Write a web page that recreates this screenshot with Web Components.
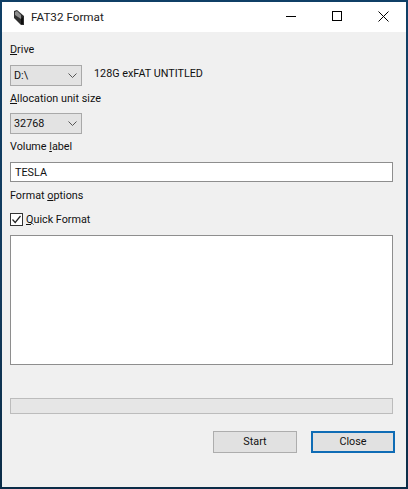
<!DOCTYPE html>
<html>
<head>
<meta charset="utf-8">
<style>
html, body { margin:0; height:100%; }
body { background:linear-gradient(180deg,#0f3f66 0%,#123a5c 60%,#0b2c47 100%); font:10.8px "Roboto","Open Sans",sans-serif; color:#111; overflow:hidden; }
</style>
</head>
<body>
<fat-window title="FAT32 Format">
  <form-label><u>D</u>rive</form-label>
  <div style="display:flex;align-items:flex-start;gap:12px;height:21px;margin-top:7px;">
    <combo-box value="D:\"></combo-box>
    <span style="line-height:17px;">128G exFAT UNTITLED</span>
  </div>
  <form-label style="margin-top:4px;"><u>A</u>llocation unit size</form-label>
  <div style="height:21px;margin-top:6px;"><combo-box value="32768"></combo-box></div>
  <form-label style="margin-top:4px;">Volume <u>l</u>abel</form-label>
  <text-box value="TESLA" style="margin-top:7px;"></text-box>
  <form-label style="margin-top:5px;">Format <u>o</u>ptions</form-label>
  <check-box style="margin-top:7px;"><u>Q</u>uick Format</check-box>
  <log-area style="margin-top:8px;"></log-area>
  <progress-bar style="margin-top:33px;"></progress-bar>
  <div style="display:flex;justify-content:flex-end;gap:14px;margin-top:17px;margin-right:-2px;">
    <push-button>Start</push-button>
    <push-button focused>Close</push-button>
  </div>
</fat-window>

<script>
// title bar + client area
class FatWindow extends HTMLElement {
  constructor(){
    super();
    this.attachShadow({mode:"open"}).innerHTML = `
    <style>
      :host { display:flex; flex-direction:column; box-sizing:border-box; width:404px; height:485px; margin:2px; background:#f0f0f0; }
      .bar { display:flex; align-items:center; height:30px; background:#fff; flex:none; }
      .app { width:10px; height:15px; margin-left:12px; }
      .name { margin-left:7px; font-size:11.7px; color:#222; flex:1; }
      .ctl { width:46px; height:30px; display:flex; align-items:center; justify-content:center; padding-bottom:2px; box-sizing:border-box; }
      .ctl svg { display:block; }
      .body { display:flex; flex-direction:column; padding:9px 13px 0 8px; flex:1; }
    </style>
    <div class="bar">
      <svg class="app" viewBox="0 0 10 15">
        <path d="M0 1 L3 0 L10 6 L10 15 L7 15 L0 8 Z" fill="#2e2e2e"/>
        <path d="M1 2 L3 1 L7 5 L7 9 L1 5 Z" fill="#8c8c8c"/>
        <path d="M7 9 L9 7 L9 14 L7 14 Z" fill="#0d0d0d"/>
      </svg>
      <span class="name"></span>
      <div class="ctl"><svg width="10" height="10"><path d="M0 5.5H10" stroke="#000" fill="none"/></svg></div>
      <div class="ctl"><svg width="10" height="10"><rect x=".5" y=".5" width="9" height="9" stroke="#000" fill="none"/></svg></div>
      <div class="ctl"><svg width="11" height="11"><path d="M.5 .5L10.5 10.5M10.5 .5L.5 10.5" stroke="#000" fill="none"/></svg></div>
    </div>
    <div class="body"><slot></slot></div>`;
    this.shadowRoot.querySelector(".name").textContent = this.getAttribute("title");
  }
}
customElements.define("fat-window", FatWindow);

class FormLabel extends HTMLElement {
  constructor(){
    super();
    this.attachShadow({mode:"open"}).innerHTML = `
    <style>:host { display:block; height:17px; line-height:17px; color:#111; }</style>
    <slot></slot>`;
  }
}
customElements.define("form-label", FormLabel);

class ComboBox extends HTMLElement {
  constructor(){
    super();
    this.attachShadow({mode:"open"}).innerHTML = `
    <style>
      :host { display:inline-flex; align-items:center; box-sizing:border-box; width:72px; height:21px; background:#e3e3e3; border:1px solid #a9a9a9; }
      .v { flex:1; padding-left:3px; }
      svg { margin-right:4px; }
    </style>
    <span class="v"></span>
    <svg width="9" height="6"><path d="M.5 .5L4.5 4.5L8.5 .5" stroke="#555" fill="none"/></svg>`;
    this.shadowRoot.querySelector(".v").textContent = this.getAttribute("value");
  }
}
customElements.define("combo-box", ComboBox);

class TextBox extends HTMLElement {
  constructor(){
    super();
    this.attachShadow({mode:"open"}).innerHTML = `
    <style>:host { display:flex; align-items:center; box-sizing:border-box; height:20px; background:#fff; border:1px solid #8e8e8e; padding-left:4px; }</style>
    <span class="v"></span>`;
    this.shadowRoot.querySelector(".v").textContent = this.getAttribute("value");
  }
}
customElements.define("text-box", TextBox);

class CheckBox extends HTMLElement {
  constructor(){
    super();
    this.attachShadow({mode:"open"}).innerHTML = `
    <style>
      :host { display:flex; align-items:center; height:16px; }
      svg { margin-right:3px; display:block; }
    </style>
    <svg width="13" height="13"><rect x=".5" y=".5" width="12" height="12" fill="#fff" stroke="#333"/><path d="M2.5 6.5L5.2 9.5L10.5 3" stroke="#222" fill="none" stroke-width="1.2"/></svg>
    <span><slot></slot></span>`;
  }
}
customElements.define("check-box", CheckBox);

class LogArea extends HTMLElement {
  constructor(){
    super();
    this.attachShadow({mode:"open"}).innerHTML = `
    <style>:host { display:block; box-sizing:border-box; height:130px; background:#fff; border:1px solid #8e8e8e; }</style>`;
  }
}
customElements.define("log-area", LogArea);

class ProgressBar extends HTMLElement {
  constructor(){
    super();
    this.attachShadow({mode:"open"}).innerHTML = `
    <style>:host { display:block; box-sizing:border-box; height:16px; background:#e6e6e6; border:1px solid #bcbcbc; }</style>`;
  }
}
customElements.define("progress-bar", ProgressBar);

class PushButton extends HTMLElement {
  constructor(){
    super();
    this.attachShadow({mode:"open"}).innerHTML = `
    <style>
      :host { display:flex; align-items:center; justify-content:center; box-sizing:border-box; width:84px; height:22px; background:#e1e1e1; border:1px solid #adadad; color:#111; padding-bottom:1px; }
      :host([focused]) { border:2px solid #0f6cb5; }
    </style>
    <slot></slot>`;
  }
}
customElements.define("push-button", PushButton);
</script>
</body>
</html>
